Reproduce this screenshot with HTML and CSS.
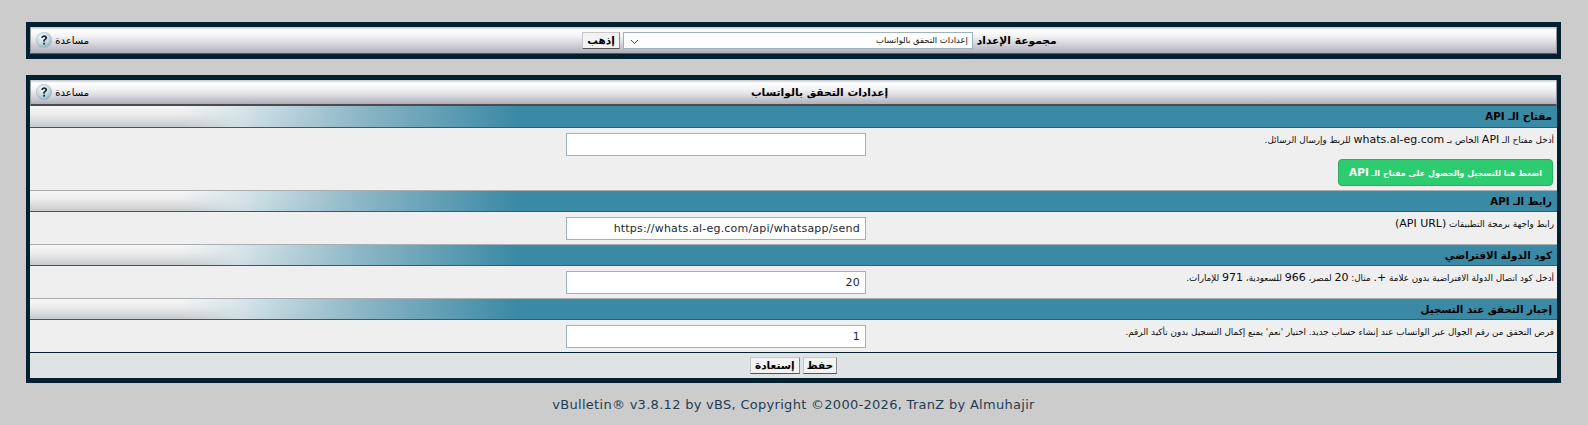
FILE: index.html
```html
<!DOCTYPE html>
<html lang="ar" dir="rtl">
<head>
<meta charset="utf-8">
<title>إعدادات التحقق بالواتساب</title>
<link rel="stylesheet" href="styles.css">
</head>
<body>
<form class="panel panel-top">
  <div class="bar">
    <div class="bar-main">
      <strong class="group-label">مجموعة الإعداد</strong>
      <select class="group-select"><option>إعدادات التحقق بالواتساب</option></select>
      <button type="button" class="btn btn-go">إذهب</button>
    </div>
    <a class="help"><span class="help-text">مساعدة</span>
      <svg class="help-icon" viewBox="0 0 16 16" aria-hidden="true"><use href="#q"/></svg>
    </a>
  </div>
</form>

<svg class="defs" width="0" height="0" aria-hidden="true">
  <defs>
    <radialGradient id="orb" cx="0.4" cy="0.3" r="0.8">
      <stop offset="0" stop-color="#f6fafb"/>
      <stop offset="0.55" stop-color="#c3d8df"/>
      <stop offset="1" stop-color="#7fa6b4"/>
    </radialGradient>
    <g id="q">
      <circle cx="8" cy="8" r="7.7" fill="url(#orb)" stroke="#9fb4bc" stroke-width="0.5"/>
      <path d="M5.3 5.9c0-1.7 1.2-2.7 2.9-2.7s2.9 1 2.9 2.4c0 1.2-.7 1.8-1.4 2.3-.6.4-.9.7-.9 1.4v.4H7.2v-.6c0-1 .4-1.5 1.1-2 .5-.4.8-.6.8-1.2 0-.5-.4-.9-1-.9-.7 0-1 .4-1.1 1z" fill="#1d2f3c"/>
      <rect x="7.2" y="10.7" width="1.8" height="1.9" fill="#1d2f3c"/>
    </g>
  </defs>
</svg>

<form class="panel panel-main">
  <div class="bar bar-title">
    <div class="bar-main"><strong class="title">إعدادات التحقق بالواتساب</strong></div>
    <a class="help"><span class="help-text">مساعدة</span>
      <svg class="help-icon" viewBox="0 0 16 16" aria-hidden="true"><use href="#q"/></svg>
    </a>
  </div>

  <section>
    <h3 class="sec-head">مفتاح الـ API</h3>
    <div class="sec-body sec-first">
      <div class="sec-desc">
        <div>أدخل مفتاح الـ <span class="lat">API</span> الخاص بـ <span class="lat">whats.al-eg.com</span> للربط وإرسال الرسائل.</div>
        <a class="cta"><span>اضغط هنا للتسجيل والحصول على مفتاح الـ <span class="lat-cta">API</span></span></a>
      </div>
      <div class="sec-field"><input class="field" type="text" dir="ltr" value=""></div>
    </div>
  </section>

  <section>
    <h3 class="sec-head">رابط الـ API</h3>
    <div class="sec-body">
      <div class="sec-desc"><div>رابط واجهة برمجة التطبيقات <span class="lat">(API URL)</span></div></div>
      <div class="sec-field"><input class="field" type="text" dir="ltr" value="https://whats.al-eg.com/api/whatsapp/send"></div>
    </div>
  </section>

  <section>
    <h3 class="sec-head">كود الدولة الافتراضي</h3>
    <div class="sec-body">
      <div class="sec-desc"><div>أدخل كود اتصال الدولة الافتراضية بدون علامة <span class="lat">+.</span> مثال: <span class="lat">20</span> لمصر، <span class="lat">966</span> للسعودية، <span class="lat">971</span> للإمارات.</div></div>
      <div class="sec-field"><input class="field" type="text" dir="ltr" value="20"></div>
    </div>
  </section>

  <section>
    <h3 class="sec-head">إجبار التحقق عند التسجيل</h3>
    <div class="sec-body">
      <div class="sec-desc"><div>فرض التحقق من رقم الجوال عبر الواتساب عند إنشاء حساب جديد. اختيار 'نعم' يمنع إكمال التسجيل بدون تأكيد الرقم.</div></div>
      <div class="sec-field"><input class="field" type="text" dir="ltr" value="1"></div>
    </div>
  </section>

  <div class="actions">
    <button type="button" class="btn btn-save">حفظ</button>
    <button type="button" class="btn">إستعادة</button>
  </div>
</form>

<footer class="copyright" dir="ltr">vBulletin® v3.8.12 by vBS, Copyright ©2000-2026, TranZ by Almuhajir</footer>
</body>
</html>
```

FILE: styles.css
```css
html, body { margin: 0; padding: 0; }
body {
  background: #cccccc;
  padding: 22px 27px 0 26px;
  font-family: "DejaVu Sans", "Liberation Sans", sans-serif;
  font-size: 10px;
  color: #111;
}
.defs { position: absolute; }
.panel {
  display: block;
  border: solid #02202f;
  border-width: 5px 4px;
  background: #efefef;
}
.panel-top { margin-bottom: 16px; }
.bar {
  display: flex;
  align-items: center;
  height: 26px;
  border: solid #5a5a5e;
  border-width: 0 1px 1px;
  border-left-color: #9a9aa0;
  border-right-color: #9a9aa0;
  background: linear-gradient(to bottom, #c4c4ca 0, #ffffff 3px, #f3f3f6 9px, #d8d8de 16px, #b0aebb 100%);
}
.bar-title { height: 24px; border-bottom: 2px solid #4c4c4e; }
.bar-main {
  flex: 1;
  display: flex;
  align-items: center;
  justify-content: center;
  gap: 3px;
}
.help {
  flex: none;
  width: 52px;
  height: 16px;
  display: flex;
  align-items: center;
  justify-content: flex-start;
  white-space: nowrap;
  gap: 3px;
}
.help-text { font-size: 10px; margin-right: -6px; color: #000; }
.help-icon { width: 16px; height: 16px; flex: none; }
.group-label, .title { font-size: 10.7px; font-weight: 700; color: #000; }
.group-label { margin-left: 1px; }
.group-select {
  appearance: none;
  width: 350px;
  height: 17px;
  padding: 0 4px 0 20px;
  border: 1px solid #9cb3bc;
  border-radius: 0;
  background: #fff url("data:image/svg+xml,%3Csvg xmlns='http://www.w3.org/2000/svg' width='9' height='6'%3E%3Cpath d='M1 1l3.5 3.5L8 1' fill='none' stroke='%23445' stroke-width='1'/%3E%3C/svg%3E") no-repeat 6px 6px;
  font: 8.4px "DejaVu Sans", sans-serif;
  color: #111;
}
.btn {
  height: 17px;
  padding: 0 4px;
  border: 1px solid #8c8c8c;
  border-left-color: #c8c8c8;
  border-top-color: #c8c8c8;
  border-bottom-color: #555;
  background: #f2f2f2;
  font: 700 10.5px "DejaVu Sans", sans-serif;
  color: #000;
  line-height: 13px;
}
.btn-save { padding: 0 3px; }
.sec-head {
  margin: 0;
  height: 19px;
  line-height: 19px;
  padding: 1px 5px 0 0;
  border-top: 1px solid #a8aeb2;
  border-bottom: 1px solid #4f5357;
  font-size: 10.3px;
  font-weight: 700;
  color: #000;
  background:
    linear-gradient(to right, rgba(215,228,232,0) 150px, rgba(208,226,232,.8) 210px, #8ab5c5 334px, #3a89a5 488px),
    linear-gradient(to bottom, #f6f6f6 0, #ececec 8px, #c8cbcd 100%);
}
section:first-of-type .sec-head { border-top: 0; height: 20px; }
.sec-body {
  display: grid;
  grid-template-columns: 45% 55%;
  height: 32px;
  background: #efefef;
}
.sec-first { height: 62px; }
.sec-desc { padding: 5px 3px 0 0; line-height: 14px; font-size: 8.8px; color: #0c0c0c; }
.lat { font-size: 11px; }
.sec-field { padding: 5px 4px 0 0; display: flex; justify-content: flex-start; }
.field {
  box-sizing: border-box;
  width: 300px;
  height: 23px;
  padding: 0 5px;
  border: 1px solid #9cb3bc;
  background: #fff;
  font: 11px "DejaVu Sans", sans-serif;
  letter-spacing: .2px;
  color: #1b2a33;
  text-align: right;
}
.cta {
  display: flex;
  align-items: center;
  justify-content: center;
  box-sizing: border-box;
  width: 215px;
  height: 27px;
  margin-top: 12px;
  margin-right: 1px;
  border: 1px solid #27ae60;
  border-radius: 4px;
  background: #2ecc71;
  color: #fff;
  font-weight: 700;
  font-size: 8px;
}
.lat-cta { font-size: 10.5px; }
.actions {
  display: flex;
  justify-content: center;
  align-items: center;
  gap: 3px;
  height: 25px;
  border-top: 1px solid #02202f;
  background: #e0e3e5;
}
.copyright {
  margin-top: 14px;
  text-align: center;
  font-size: 13px;
  letter-spacing: .29px;
  color: #1f3d52;
}
```
